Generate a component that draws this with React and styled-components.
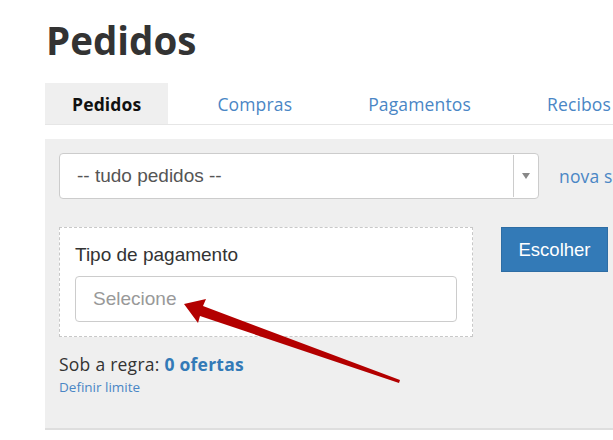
import React from "react";
import styled, { createGlobalStyle } from "styled-components";

const Global = createGlobalStyle`
  html, body { margin: 0; padding: 0; background: #fff; overflow: hidden; }
  body { font-family: "Open Sans", "Liberation Sans", sans-serif; }
`;

const Page = styled.div`
  width: 613px;
  height: 440px;
  overflow: hidden;
  position: relative;
`;

const Inner = styled.div`
  width: 720px;
  padding: 14px 0 0 45px;
`;

const Title = styled.h1`
  margin: 0 0 0 1px;
  font-family: "Open Sans", sans-serif;
  font-weight: 700;
  font-size: 38.5px;
  line-height: 52px;
  color: #333;
  height: 69px;
`;

const Tabs = styled.div`
  display: flex;
  gap: 22px;
  border-bottom: 1px solid #e6e6e6;
`;

const Tab = styled.div`
  height: 41px;
  padding: 0 27px;
  display: flex;
  align-items: center;
  font-family: "Open Sans", sans-serif;
  font-size: 17.5px;
  letter-spacing: 0.15px;
  font-weight: ${(p) => (p.$active ? 700 : 400)};
  color: ${(p) => (p.$active ? "#111" : "#4a86c5")};
  background: ${(p) => (p.$active ? "#efefef" : "transparent")};
  white-space: nowrap;
`;

const Panel = styled.div`
  margin-top: 14px;
  background: #efefef;
  border-bottom: 2px solid #dedede;
  padding: 14px 14px 0;
  height: 275px;
`;

const SelectRow = styled.div`
  display: flex;
  align-items: center;
  gap: 20px;
`;

const SelectBox = styled.div`
  width: 478px;
  height: 44px;
  background: #fff;
  border: 1px solid #ccc;
  border-radius: 4px;
  display: flex;
  align-items: stretch;
`;

const SelectText = styled.div`
  flex: 1;
  display: flex;
  align-items: center;
  padding-left: 17px;
  font-family: "Liberation Sans", Arial, sans-serif;
  font-size: 19px;
  color: #555;
`;

const SelectArrow = styled.div`
  width: 24px;
  margin: 1px 0;
  border-left: 1px solid #ccc;
  display: flex;
  align-items: center;
  justify-content: center;
`;

const Link = styled.a`
  font-family: "Open Sans", sans-serif;
  font-size: 17.5px;
  letter-spacing: 0.15px;
  color: #4a86c5;
  text-decoration: none;
  white-space: nowrap;
`;

const FilterRow = styled.div`
  display: flex;
  align-items: flex-start;
  gap: 28px;
  margin-top: 28px;
`;

const DashedBox = styled.div`
  width: 382px;
  background: #fff;
  border: 1px dashed #c8c8c8;
  padding: 15px 15px 14px;
`;

const Label = styled.div`
  font-family: "Liberation Sans", Arial, sans-serif;
  font-size: 19px;
  color: #333;
  line-height: 24px;
  margin-bottom: 9px;
`;

const Input = styled.div`
  height: 44px;
  border: 1px solid #ccc;
  border-radius: 4px;
  display: flex;
  align-items: center;
  padding-left: 17px;
  font-family: "Liberation Sans", Arial, sans-serif;
  font-size: 19px;
  color: #999;
`;

const Button = styled.button`
  width: 107px;
  height: 45px;
  background: #337ab7;
  border: 1px solid #2e6da4;
  color: #fff;
  font-family: "Liberation Sans", Arial, sans-serif;
  font-size: 18.5px;
  padding: 0;
`;

const Rule = styled.div`
  margin-top: 15px;
  font-family: "Open Sans", sans-serif;
  font-size: 17.5px;
  letter-spacing: 0.25px;
  color: #333;
  line-height: 24px;
`;

const Strong = styled.span`
  color: #337ab7;
  font-weight: 700;
`;

const SmallLink = styled.a`
  display: block;
  font-family: "Open Sans", sans-serif;
  font-size: 13.5px;
  line-height: 20px;
  margin-top: 1px;
  color: #4a86c5;
  text-decoration: none;
`;

const ArrowSvg = styled.svg`
  position: absolute;
  left: 0;
  top: 0;
  pointer-events: none;
`;

export default function App() {
  return (
    <Page>
      <Global />
      <Inner>
        <Title>Pedidos</Title>
        <Tabs>
          <Tab $active>Pedidos</Tab>
          <Tab>Compras</Tab>
          <Tab>Pagamentos</Tab>
          <Tab>Recibos</Tab>
        </Tabs>
        <Panel>
          <SelectRow>
            <SelectBox>
              <SelectText>-- tudo pedidos --</SelectText>
              <SelectArrow>
                <svg width="8" height="6" viewBox="0 0 8 6">
                  <path d="M0 0 H8 L4 6 Z" fill="#888" />
                </svg>
              </SelectArrow>
            </SelectBox>
            <Link href="#">nova seleção</Link>
          </SelectRow>
          <FilterRow>
            <DashedBox>
              <Label>Tipo de pagamento</Label>
              <Input>Selecione</Input>
            </DashedBox>
            <Button>Escolher</Button>
          </FilterRow>
          <Rule>
            Sob a regra: <Strong>0 ofertas</Strong>
          </Rule>
          <SmallLink href="#">Definir limite</SmallLink>
        </Panel>
      </Inner>
      <ArrowSvg width="613" height="440" viewBox="0 0 613 440">
        <polygon
          points="184,304 206,299 203,306 400,380 399,383 200,316 198,323"
          fill="#b30000"
        />
      </ArrowSvg>
    </Page>
  );
}
